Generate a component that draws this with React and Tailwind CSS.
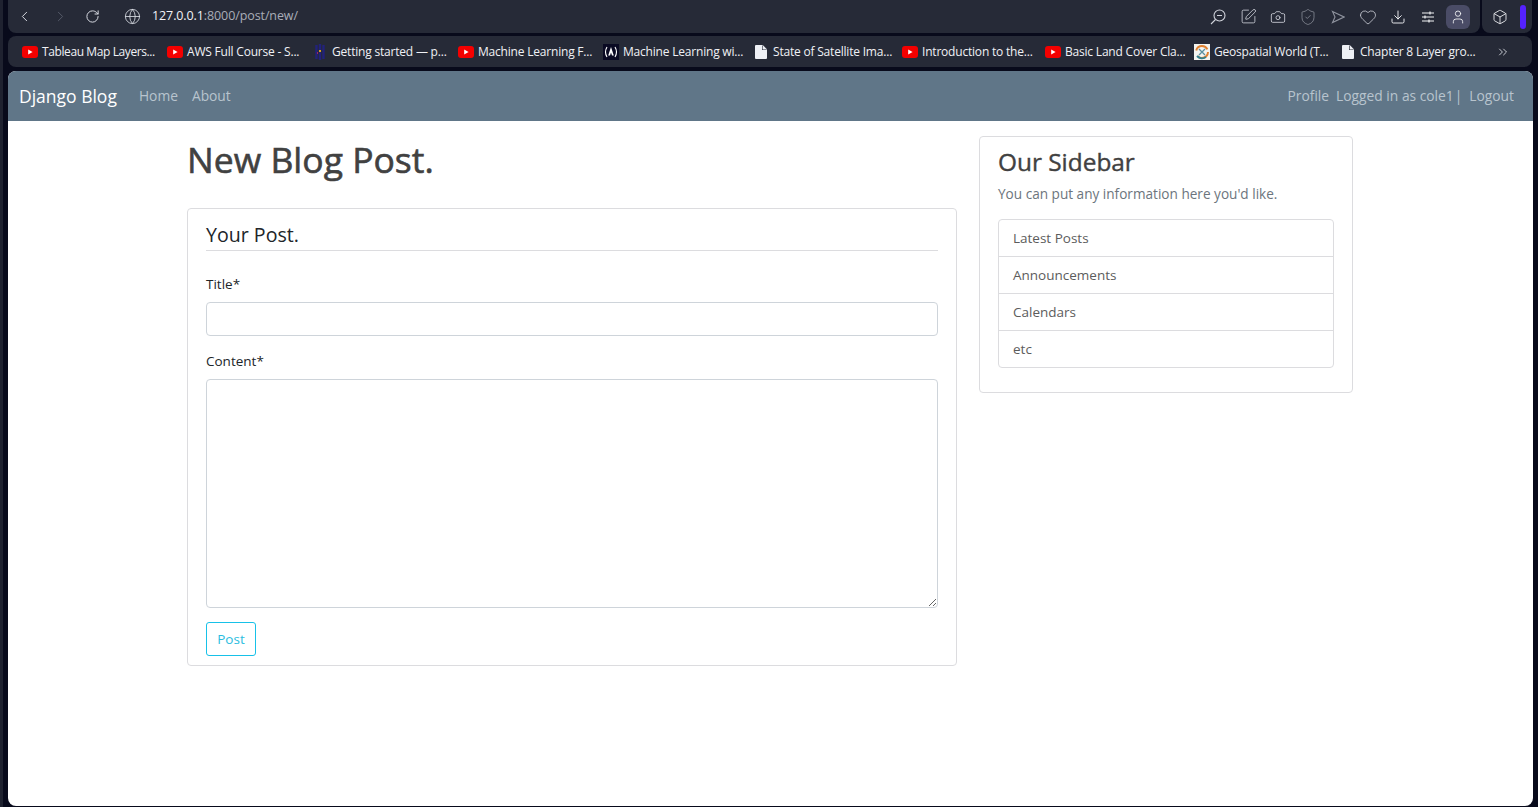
import React from 'react';
import { ChevronLeft, ChevronRight, RotateCw, Globe, SquarePen, Camera, ShieldCheck, Heart, Download, User, Box, ChevronsRight } from 'lucide-react';

const sans = 'font-["Open_Sans",sans-serif]';

const YouTube = () => (
  <svg width="16" height="12" viewBox="0 0 16 12" className="shrink-0">
    <rect width="16" height="12" rx="3" fill="#f40000" />
    <path d="M6.2 3.6 10.6 6 6.2 8.4z" fill="#fff" />
  </svg>
);

const Doc = () => (
  <svg width="12" height="14" viewBox="0 0 12 14" className="ml-[1px] mr-[2px] shrink-0">
    <path d="M0 1a1 1 0 0 1 1-1h6.5L12 4.5V13a1 1 0 0 1-1 1H1a1 1 0 0 1-1-1z" fill="#eef0f5" />
    <path d="M7 0v5h5" fill="#262a37" />
    <path d="M7.6 0 12 4.4H7.6z" fill="#eef0f5" />
  </svg>
);

const Sphinx = () => (
  <svg width="16" height="16" viewBox="0 0 16 16" className="shrink-0">
    <path d="M4.5 1v14M8 0v16M11.5 1v14" stroke="#22227a" strokeWidth="2.4" />
    <rect x="7" y="6" width="2" height="2" fill="#d8a020" />
    <rect x="5" y="8" width="1" height="2" fill="#a02060" />
  </svg>
);

const FreeCode = () => (
  <svg width="16" height="16" viewBox="0 0 16 16" className="shrink-0">
    <rect width="16" height="16" fill="#0a0a23" />
    <path d="M4 3Q1 8 4 13M12 3Q15 8 12 13" stroke="#fff" strokeWidth="1.1" fill="none" />
    <path d="M8 3 10.8 11.5H9L8 8.5 7 11.5H5.2z" fill="#fff" />
  </svg>
);

const Geo = () => (
  <svg width="16" height="16" viewBox="0 0 16 16" className="shrink-0">
    <rect width="16" height="16" fill="#f4f4f0" />
    <circle cx="8" cy="8" r="6" fill="none" stroke="#e08030" strokeWidth="2" strokeDasharray="14 6" />
    <path d="M3 12a7 7 0 0 0 9 1" fill="none" stroke="#2f7f8f" strokeWidth="2" />
    <path d="M5 5l6 6M11 5l-6 6" stroke="#5a8fa0" strokeWidth="1.3" />
  </svg>
);

const bookmarks = [
  { icon: <YouTube />, label: 'Tableau Map Layers...', w: 'w-[145px] tracking-[-0.4px]' },
  { icon: <YouTube />, label: 'AWS Full Course - S...', w: 'w-[145px]' },
  { icon: <Sphinx />, label: 'Getting started — p...', w: 'w-[146px]' },
  { icon: <YouTube />, label: 'Machine Learning F...', w: 'w-[145px]' },
  { icon: <FreeCode />, label: 'Machine Learning wi...', w: 'w-[151px]' },
  { icon: <Doc />, label: 'State of Satellite Ima...', w: 'w-[148px]' },
  { icon: <YouTube />, label: 'Introduction to the...', w: 'w-[143px]' },
  { icon: <YouTube />, label: 'Basic Land Cover Cla...', w: 'w-[149px]' },
  { icon: <Geo />, label: 'Geospatial World (T...', w: 'w-[147px]' },
  { icon: <Doc />, label: 'Chapter 8 Layer gro...', w: 'w-[145px]' },
];

const sideLinks = ['Latest Posts', 'Announcements', 'Calendars', 'etc'];

export default function App() {
  return (
    <div className={`flex h-[807px] w-[1538px] overflow-hidden bg-[#080a1b] ${sans}`}>
      <div className="w-[3px] shrink-0 bg-[#1f2230]" />
      <div className="ml-[5px] flex w-[1525px] flex-col">
        {/* browser toolbar */}
        <div className="flex h-[33px] gap-[2px]">
          <div className="flex w-[1472px] items-center rounded-b-lg bg-[#262a37] text-[#d8dbe3]">
            <ChevronLeft size={17} strokeWidth={1.4} className="ml-[8px]" />
            <ChevronRight size={17} strokeWidth={1.4} className="ml-[19px] text-[#555a68]" />
            <RotateCw size={15} strokeWidth={1.6} className="ml-[16px]" />
            <Globe size={17} strokeWidth={1.2} className="ml-[24px]" />
            <span className="ml-[11px] text-[12.5px] leading-none tracking-[-0.1px] text-[#f2f3f6]">
              127.0.0.1<span className="text-[#a9adb8]">:8000/post/new/</span>
            </span>
            <div className="mr-[7px] ml-auto flex items-center">
              <div className="flex w-[30px] justify-center">
                <svg width="16" height="16" viewBox="0 0 16 16" fill="none" stroke="#d0d3db" strokeWidth="1.1">
                  <circle cx="9.5" cy="6.5" r="5.5" />
                  <path d="M7 6.5h5M5.5 10.5 1 15" />
                </svg>
              </div>
              <div className="flex w-[30px] justify-center"><SquarePen size={17} strokeWidth={1.1} /></div>
              <div className="flex w-[30px] justify-center"><Camera size={16} strokeWidth={1.2} /></div>
              <div className="flex w-[30px] justify-center"><ShieldCheck size={18} strokeWidth={1} className="text-[#8f939e]" /></div>
              <div className="flex w-[30px] justify-center">
                <svg width="14" height="14" viewBox="0 0 14 14" fill="none" stroke="#8f939e" strokeWidth="1.1">
                  <path d="M1.5 1.5 13 7 1.5 12.5 4 7z" />
                </svg>
              </div>
              <div className="flex w-[30px] justify-center"><Heart size={18} strokeWidth={1} /></div>
              <div className="flex w-[30px] justify-center"><Download size={16} strokeWidth={1.4} className="text-[#f2f3f6]" /></div>
              <div className="flex w-[30px] justify-center">
                <svg width="14" height="14" viewBox="0 0 14 14" fill="none" stroke="#f2f3f6" strokeWidth="1.2">
                  <path d="M1 3h12M1 7h12M1 11h12M9 1.5v3M4 5.5v3M8 9.5v3" />
                </svg>
              </div>
              <div className="flex w-[30px] justify-center">
                <div className="flex h-6 w-6 items-center justify-center rounded-md bg-[#4a4c66]">
                  <User size={16} strokeWidth={1.3} className="text-[#f2f3f6]" />
                </div>
              </div>
            </div>
          </div>
          <div className="flex w-[50px] items-center justify-between rounded-b-lg bg-[#262a37] pr-[6px] pl-[10px] text-[#f2f3f6]">
            <Box size={16} strokeWidth={1.3} />
            <div className="h-6 w-[6px] rounded-full bg-[#5522ff]" />
          </div>
        </div>
        {/* bookmarks bar */}
        <div className="mt-[3px] mr-[1px] flex h-[31px] items-center rounded-lg bg-[#262a37] pl-[14px] text-[12px] tracking-[-0.2px] text-[#f0f1f5]">
          {bookmarks.map((b) => (
            <div key={b.label} className={`flex items-center gap-[4px] whitespace-nowrap ${b.w}`}>
              {b.icon}
              <span>{b.label}</span>
            </div>
          ))}
          <ChevronsRight size={14} strokeWidth={1.4} className="ml-[10px] text-[#e8eaf0]" />
        </div>
        {/* page */}
        <div className="mt-1 mb-[1px] flex-1 overflow-hidden rounded-lg bg-white">
          <nav className="flex h-[50px] items-center bg-[#607688] pr-[19px] pl-[11px]">
            <span className="text-[17.5px] text-white">Django Blog</span>
            <span className="ml-[22px] text-[13.8px] text-[#b8c4ce]">Home</span>
            <span className="ml-[14px] text-[13.8px] text-[#b8c4ce]">About</span>
            <div className="ml-auto flex text-[13.8px] text-[#b8c4ce]">
              <span>Profile</span>
              <span className="ml-[7px]">Logged in as cole1</span>
              <span className="ml-[1px]">|</span>
              <span className="ml-[7px]">Logout</span>
            </div>
          </nav>
          <div className="flex pl-[179px]">
            <main className="w-[770px] shrink-0">
              <h1 className="mt-[12px] mb-[23px] text-[35.5px] leading-[52px] text-[#414141] [-webkit-text-stroke:0.6px_#414141]">New Blog Post.</h1>
              <div className="h-[458px] rounded border border-[#dcdcdf] px-[18px] pt-[12px]">
                <div className="h-[30px] border-b border-[#dcdcdf] text-[19.6px] leading-[28px] text-[#212529]">Your Post.</div>
                <label className="mt-[23px] block text-[13.5px] leading-[20px] text-[#212529]">Title*</label>
                <input className="mt-2 block h-[34px] w-full rounded border border-[#ced4da]" />
                <label className="mt-[15px] block text-[13.5px] leading-[20px] text-[#212529]">Content*</label>
                <textarea className="mt-2 block h-[229px] w-full rounded border border-[#ced4da]" />
                <button className="mt-[14px] h-[34px] w-[50px] rounded-[3px] border border-[#17c1e8] text-[13.5px] text-[#2bbde0]">Post</button>
              </div>
            </main>
            <aside className="mt-[15px] ml-[22px] h-[257px] w-[374px] rounded border border-[#dcdcdf] px-[18px]">
              <h3 className="mt-[7px] text-[24.4px] leading-[36px] text-[#414141] [-webkit-text-stroke:0.4px_#414141]">Our Sidebar</h3>
              <p className="mt-[4px] text-[13.6px] leading-[20px] text-[#6c757d]">You can put any information here you'd like.</p>
              <ul className="mt-[15px] rounded border border-[#dcdcdf]">
                {sideLinks.map((s) => (
                  <li key={s} className="h-[37px] border-b border-[#dcdcdf] pl-[14px] text-[13.5px] leading-[36px] text-[#5c5c5c] last:h-[36px] last:border-b-0">{s}</li>
                ))}
              </ul>
            </aside>
          </div>
        </div>
      </div>
    </div>
  );
}
